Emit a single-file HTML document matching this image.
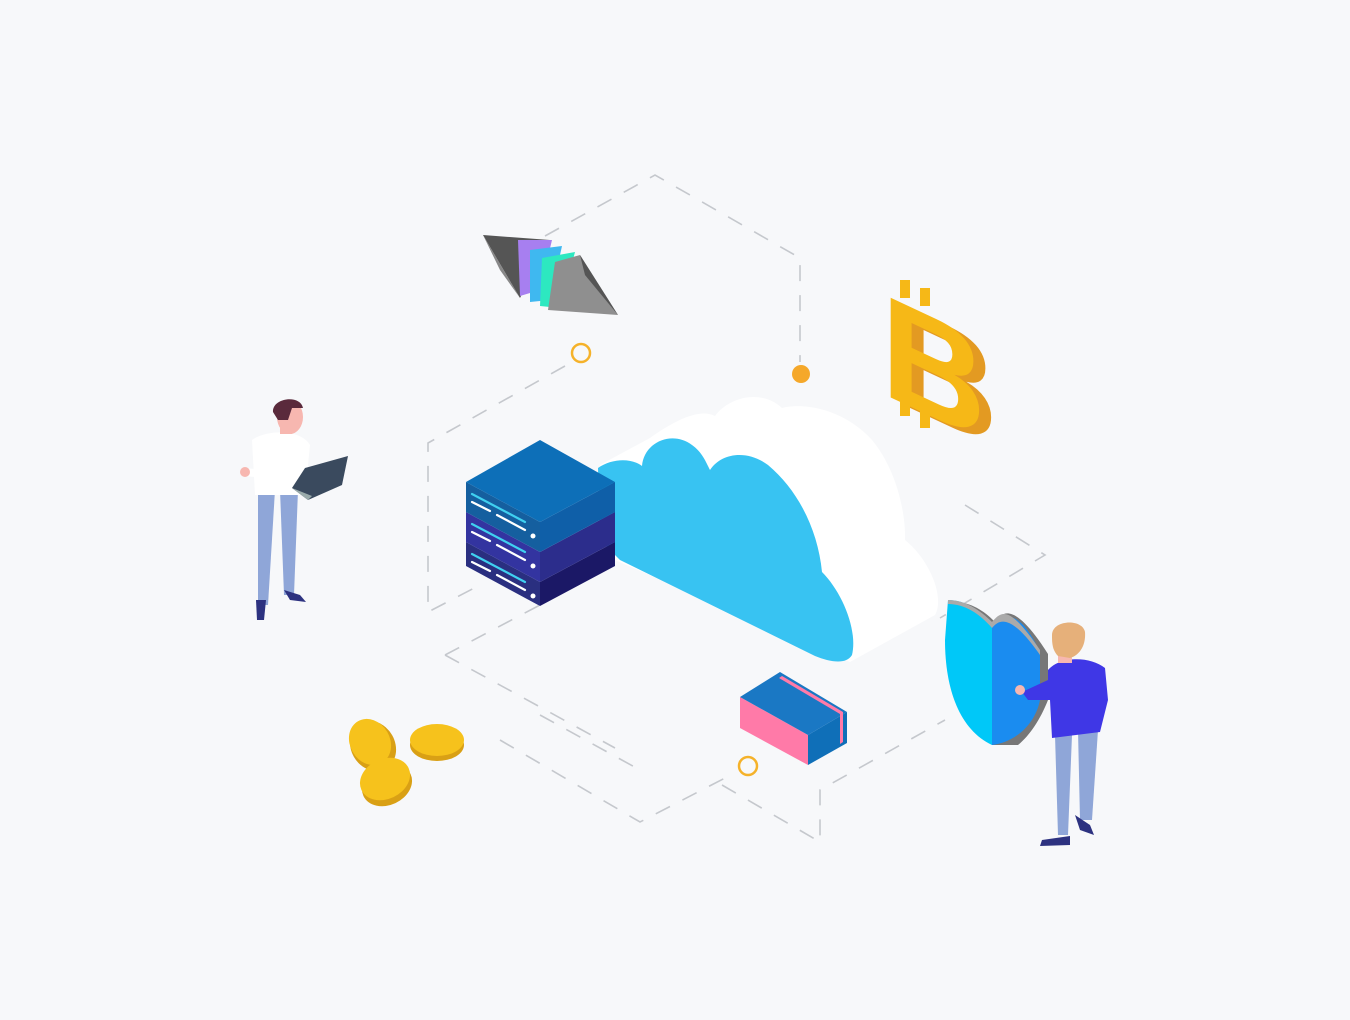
<!DOCTYPE html>
<html><head><meta charset="utf-8"><style>
html,body{margin:0;padding:0;background:#f7f8fa;}
svg{display:block}
</style></head><body>
<svg width="1350" height="1020" viewBox="0 0 1350 1020" xmlns="http://www.w3.org/2000/svg">
<rect width="1350" height="1020" fill="#f7f8fa"/>
<g stroke="#c5c8cd" stroke-width="1.6" stroke-dasharray="16 14" fill="none">
<path d="M545,236 L655,175 L800,258 L800,362"/>
<path d="M565,366 L428,443 L428,612 L480,585"/>
<path d="M965,505 L1045,555 L940,618"/>
<path d="M445,655 L540,605"/>
<path d="M445,655 L615,748"/>
<path d="M540,715 L640,770"/>
<path d="M500,740 L640,822 L725,778"/>
<path d="M722,785 L820,842 L820,790 L945,720"/>
</g>
<circle cx="581" cy="353" r="9" fill="none" stroke="#f5b22a" stroke-width="2.5"/>
<circle cx="801" cy="374" r="9" fill="#f5a82a"/>
<circle cx="748" cy="766" r="9" fill="none" stroke="#f5b22a" stroke-width="2.5"/>

<path d="M600,465 L650,438 C675,420 700,408 715,416 C728,398 760,388 782,408 C805,402 845,410 872,440 C897,470 906,515 905,540 C930,560 945,598 935,615 L850,662 L615,560 Z" fill="#ffffff"/>
<path d="M598,468 C612,458 632,458 642,466 C644,442 672,430 692,445 C702,452 706,462 710,470 C722,452 748,450 768,465 C798,490 818,530 822,572 C842,592 858,630 852,655 C846,665 830,662 815,656 L620,560 L600,540 Z" fill="#38c3f2"/>

<g>
<path d="M466,542 L540,582 L540,606 L466,566 Z" fill="#2a2f80"/>
<path d="M540,582 L615,542 L615,566 L540,606 Z" fill="#1b1866"/>
<path d="M466,512 L540,552 L540,582 L466,542 Z" fill="#3334a0"/>
<path d="M540,552 L615,512 L615,542 L540,582 Z" fill="#2c2d8c"/>
<path d="M466,482 L540,522 L540,552 L466,512 Z" fill="#155f9f"/>
<path d="M540,522 L615,482 L615,512 L540,552 Z" fill="#0f5fa8"/>
<path d="M466,482 L540,440 L615,482 L540,522 Z" fill="#0d6fb8"/>
<g stroke-width="2.2" stroke-linecap="round">
<path d="M472,494 L525,522" stroke="#3fd0f0"/><path d="M472,502 L490,511 M497,515 L525,530" stroke="#fff"/>
<path d="M472,524 L525,552" stroke="#3fd0f0"/><path d="M472,532 L490,541 M497,545 L525,560" stroke="#fff"/>
<path d="M472,554 L525,582" stroke="#3fd0f0"/><path d="M472,562 L490,571 M497,575 L525,590" stroke="#fff"/>
</g>
<circle cx="533" cy="536" r="2.5" fill="#fff"/><circle cx="533" cy="566" r="2.5" fill="#fff"/><circle cx="533" cy="596" r="2.5" fill="#fff"/>
</g>

<path d="M483,235 L550,240 L520,298 Z" fill="#555"/>
<path d="M483,235 L520,298 L500,270 Z" fill="#888"/>
<path d="M518,240 L552,240 L540,290 L520,296 Z" fill="#a77ff0"/>
<path d="M530,250 L562,246 L550,300 L530,302 Z" fill="#3fb8f0"/>
<path d="M542,258 L575,252 L560,308 L540,306 Z" fill="#2de8c0"/>
<path d="M555,262 L580,255 L618,315 L548,310 Z" fill="#8f8f8f"/>
<path d="M580,255 L618,315 L585,275 Z" fill="#555"/>

<g font-family="Liberation Sans, sans-serif" font-weight="bold" font-size="145">
<text x="0" y="0" transform="translate(893,400) skewY(25)" fill="#e39a22">B</text>
<text x="0" y="0" transform="translate(881,393) skewY(25)" fill="#f6b817">B</text>
<path d="M905,280 L905,298 M925,288 L925,306 M905,396 L905,416 M925,406 L925,428" stroke="#f6b817" stroke-width="10"/>
</g>

<g>
<ellipse cx="437" cy="745" rx="27" ry="16" fill="#d9a015"/>
<ellipse cx="437" cy="740" rx="27" ry="16" fill="#f6c21c"/>
<ellipse cx="373" cy="746" rx="22" ry="26" fill="#d9a015" transform="rotate(-30 373 746)"/>
<ellipse cx="370" cy="742" rx="20" ry="24" fill="#f6c21c" transform="rotate(-30 370 742)"/>
<ellipse cx="387" cy="785" rx="26" ry="20" fill="#d9a015" transform="rotate(-25 387 785)"/>
<ellipse cx="385" cy="779" rx="26" ry="20" fill="#f6c21c" transform="rotate(-25 385 779)"/>
</g>

<path d="M740,697 L808,735 L808,765 L740,728 Z" fill="#ff7aa8"/>
<path d="M808,735 L847,712 L847,743 L808,765 Z" fill="#0f6fb8"/>
<path d="M740,697 L780,672 L847,712 L808,735 Z" fill="#1a78c4"/>
<path d="M782,676 L843,712 L843,742 L840,744 L840,714 L779,678 Z" fill="#ff7aa8"/>

<path d="M948,605 C960,598 980,606 995,622 C1005,606 1020,610 1048,654 L1048,700 C1040,720 1030,735 1018,745 L992,745 Z" fill="#777"/>
<path d="M948,600 C965,600 980,610 992,625 L992,745 C960,730 945,690 945,640 Z" fill="#00c8f8"/>
<path d="M992,625 C1005,612 1020,610 1040,652 L1040,700 C1035,725 1015,742 992,745 Z" fill="#1a8cf0"/>
<path d="M948,600 C965,600 980,610 992,622 C1002,610 1010,606 1040,650 L1040,655 C1012,615 1000,618 992,628 C980,614 965,604 948,604 Z" fill="#aaa"/>

<g>
<path d="M1055,735 L1072,735 L1068,835 L1058,835 Z" fill="#8fa6d8"/>
<path d="M1078,730 L1098,730 L1092,820 L1080,820 Z" fill="#8fa6d8"/>
<path d="M1042,840 L1070,836 L1070,845 L1040,846 Z" fill="#2d3280"/>
<path d="M1075,815 L1090,825 L1094,835 L1080,830 Z" fill="#2d3280"/>
<path d="M1048,670 C1060,656 1090,656 1105,668 L1108,700 L1100,732 L1052,738 L1050,700 L1028,700 L1022,692 L1048,680 Z" fill="#3f37e6"/>
<circle cx="1020" cy="690" r="5" fill="#f7b7b0"/>
<rect x="1058" y="645" width="14" height="18" fill="#f7b7b0"/>
<path d="M1052,635 C1052,620 1082,618 1085,632 C1086,645 1080,655 1070,658 L1058,656 C1052,650 1052,642 1052,635 Z" fill="#e6b07a"/>
</g>

<g>
<path d="M258,490 L275,490 L268,605 L258,605 Z" fill="#8fa6d8"/>
<path d="M280,490 L298,490 L294,595 L284,595 Z" fill="#8fa6d8"/>
<path d="M256,600 L266,600 L264,620 L257,620 Z" fill="#2d3280"/>
<path d="M284,590 L300,595 L306,602 L290,600 Z" fill="#2d3280"/>
<path d="M252,440 C265,430 300,428 310,445 L305,495 L255,495 Z" fill="#ffffff"/>
<path d="M243,468 L290,472 L292,480 L243,476 Z" fill="#ffffff"/>
<circle cx="245" cy="472" r="5" fill="#f7b7b0"/>
<path d="M292,488 L305,468 L348,456 L342,485 L308,500 Z" fill="#3a4a5e"/>
<path d="M292,488 L308,500 L312,496 Z" fill="#9aa"/>
<rect x="280" y="418" width="12" height="16" fill="#f7b7b0"/>
<ellipse cx="290" cy="417" rx="13" ry="17" fill="#f7b7b0"/>
<path d="M273,412 C272,398 300,394 303,408 L292,408 L288,420 L278,420 Z" fill="#5a2a3c"/>
</g>
</svg>
</body></html>
